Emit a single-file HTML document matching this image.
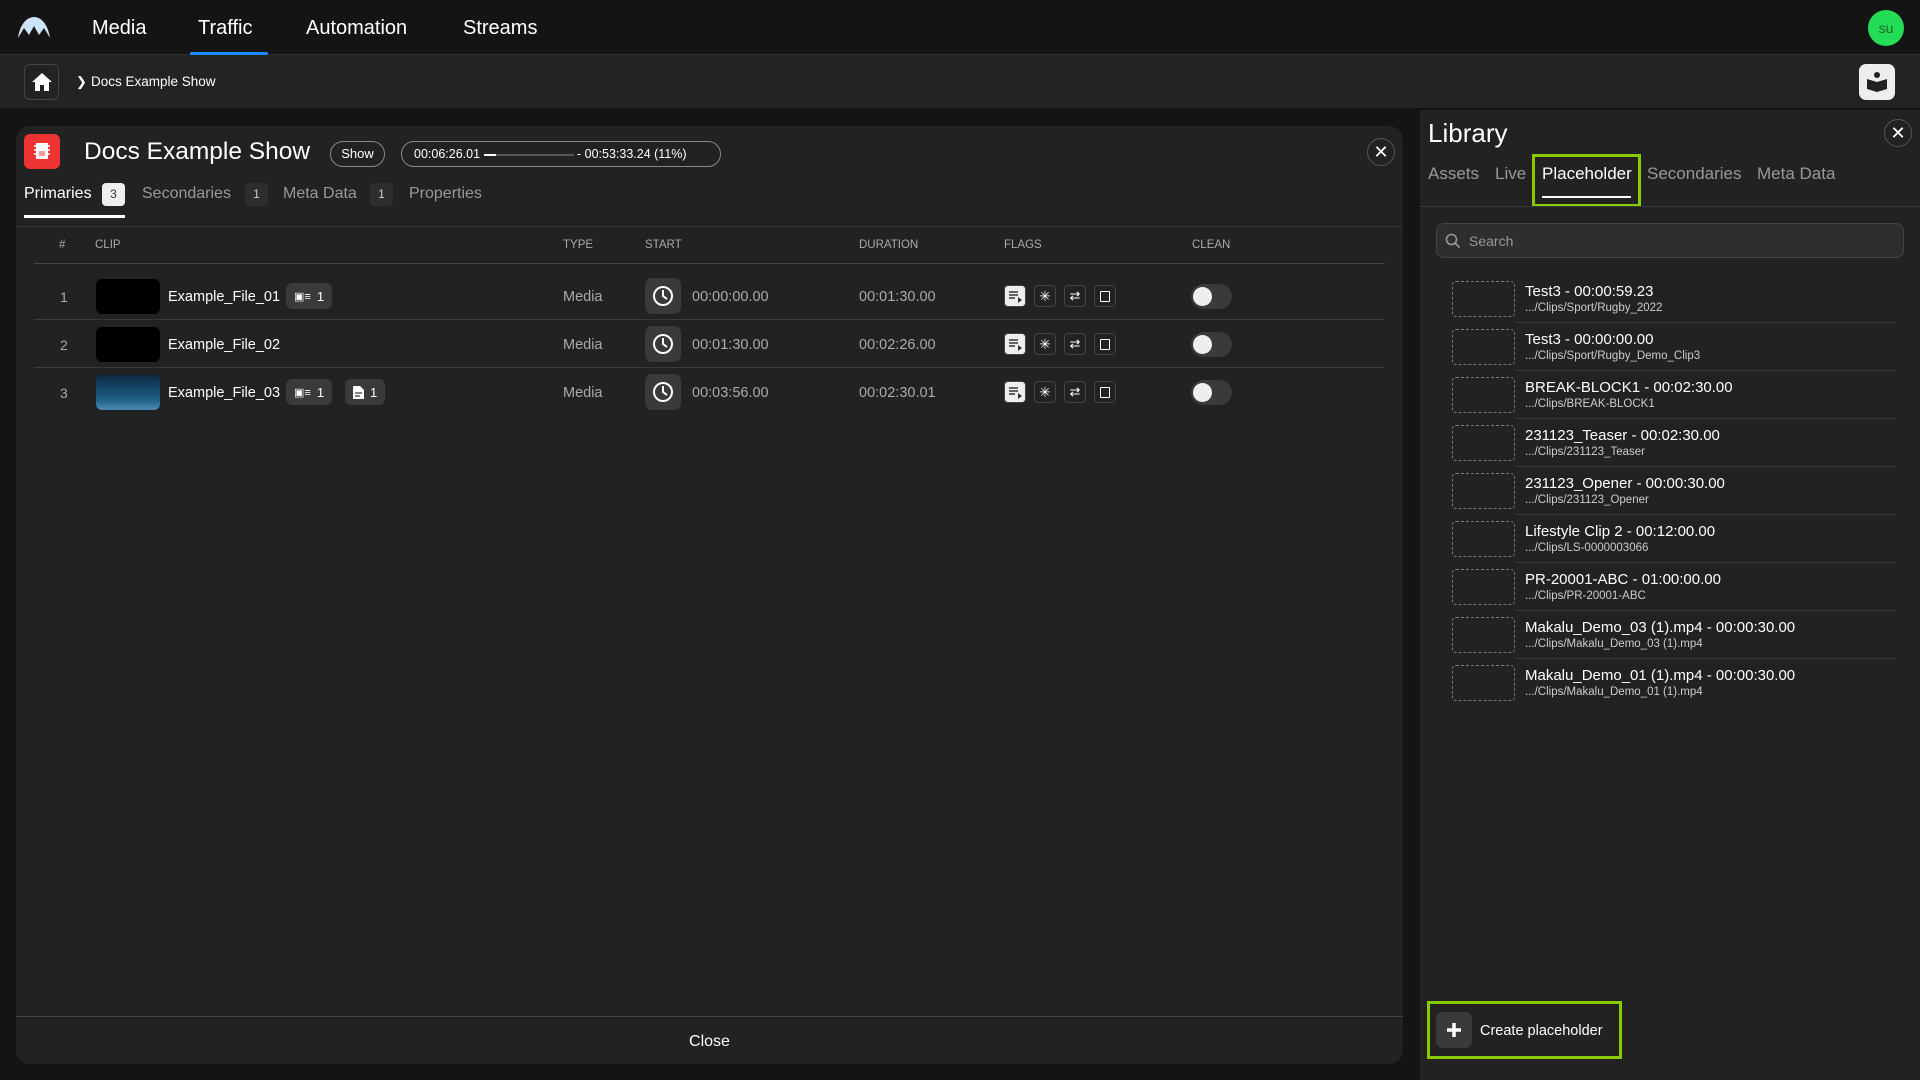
<!DOCTYPE html>
<html><head><meta charset="utf-8"><style>
*{box-sizing:border-box;margin:0;padding:0}
body{width:1920px;height:1080px;background:#141414;font-family:"Liberation Sans",sans-serif;color:#fff;position:relative;overflow:hidden}
.a{position:absolute}
.nav{font-size:20px;top:17px}
.th{font-size:11.5px;color:#aaa;top:239px}
.row{position:absolute;left:34px;width:1351px;height:48px;border-bottom:1px solid #3a3a3a}
.row>*{position:absolute}
.thumb{left:62px;top:7px;width:64px;height:35px;border-radius:6px;background:#000}
.nm{left:134px;top:17px;font-size:14.5px}
.bd{top:11px;height:26px;border-radius:6px;background:#3a3a3a;font-size:13px;padding:6px 8px;display:flex;gap:6px;align-items:center}
.ty{left:529px;top:17px;font-size:14.5px;color:#aaa}
.clk{left:611px;top:6px;width:36px;height:36px;border-radius:7px;background:#3a3a3a}
.st{left:658px;top:17px;font-size:14.5px;color:#aaa}
.du{left:825px;top:17px;font-size:14.5px;color:#aaa}
.fl{top:13px;width:22px;height:22px;border:1px solid #444;border-radius:4px}
.tg{left:1157px;top:12px;width:41px;height:25px;border-radius:13px;background:#3a3a3a}
.tg:after{content:"";position:absolute;left:2px;top:3px;width:19px;height:19px;border-radius:50%;background:#eee}
.it{position:absolute;left:1452px;width:444px;height:48px}
.it .bx{position:absolute;left:0;top:6px;width:63px;height:36px;border:1px dashed #777;border-radius:4px}
.it .t{position:absolute;left:73px;top:8px;font-size:15px}
.it .s{position:absolute;left:73px;top:27px;font-size:11.5px;color:#ccc}
.it .ln{position:absolute;left:64px;right:0;bottom:0;border-bottom:1px solid #3a3a3a}
</style></head><body>
<div class="a" style="left:0;top:0;width:1920px;height:55px;background:#141414;border-bottom:1px solid #333"></div>
<svg class="a" style="left:17px;top:16px" width="34" height="22" viewBox="0 0 34 22"><path d="M1 22C3 8 10 1 17 1S31 8 33 22L27 12 22 19 17 10 12 19 7 12Z" fill="#cfe3f7"/></svg>
<div class="a nav" style="left:92px">Media</div>
<div class="a nav" style="left:198px">Traffic</div>
<div class="a" style="left:190px;top:52px;width:78px;height:3px;background:#1a8cff;border-radius:2px"></div>
<div class="a nav" style="left:306px">Automation</div>
<div class="a nav" style="left:463px">Streams</div>
<div class="a" style="left:1868px;top:10px;width:36px;height:36px;border-radius:50%;background:#22dd55;color:#1a6a30;font-size:14px;text-align:center;line-height:36px">su</div>
<div class="a" style="left:0;top:55px;width:1920px;height:53px;background:#232323"></div>
<div class="a" style="left:24px;top:64px;width:35px;height:36px;border:1px solid #444;border-radius:6px"></div>
<svg class="a" style="left:31px;top:71px" width="22" height="22" viewBox="0 0 22 22"><path d="M11 2L1 11h3v9h5v-6h4v6h5v-9h3z" fill="#fff"/></svg>
<div class="a" style="left:76px;top:74px;font-size:13px">&#x276F;</div>
<div class="a" style="left:91px;top:74px;font-size:13.5px">Docs Example Show</div>
<div class="a" style="left:1859px;top:64px;width:36px;height:36px;border-radius:7px;background:#eee"></div>
<svg class="a" style="left:1866px;top:70px" width="22" height="24" viewBox="0 0 22 24"><circle cx="11" cy="5" r="3" fill="#222"/><path d="M1 9l10 3 10-3v10l-10 3-10-3z" fill="#222"/></svg>
<div class="a" style="left:16px;top:126px;width:1387px;height:938px;background:#222;border-radius:14px;overflow:hidden">
 <div class="a" style="left:8px;top:8px;width:36px;height:35px;border-radius:6px;background:#ee3333"></div>
 <svg class="a" style="left:16px;top:15px" width="20" height="20" viewBox="0 0 20 20"><rect x="4" y="2" width="12" height="16" rx="1" fill="#fff"/><path d="M2 5h2M2 9h2M2 13h2M16 5h2M16 9h2M16 13h2" stroke="#fff" stroke-width="1.5"/><path d="M8 10v5M10 10v5M12 10v5" stroke="#e33" stroke-width="1"/></svg>
 <div class="a" style="left:68px;top:12px;font-size:24.5px">Docs Example Show</div>
 <div class="a" style="left:314px;top:15px;width:55px;height:26px;border:1px solid #888;border-radius:13px;font-size:13px;text-align:center;line-height:24px">Show</div>
 <div class="a" style="left:385px;top:15px;width:320px;height:26px;border:1px solid #888;border-radius:13px;font-size:12.5px;line-height:24px;padding-left:12px">00:06:26.01 <span style="display:inline-block;width:90px;height:2px;background:#555;vertical-align:middle;position:relative"><span style="position:absolute;left:0;top:0;width:12px;height:2px;background:#fff"></span></span> - 00:53:33.24 (11%)</div>
 <div class="a" style="left:1351px;top:12px;width:28px;height:28px;border:1px solid #555;border-radius:50%;text-align:center;line-height:26px;font-size:18px">&#x2715;</div>
 <div class="a" style="left:8px;top:59px;font-size:16px">Primaries</div>
 <div class="a" style="left:86px;top:57px;width:23px;height:23px;background:#eee;color:#333;border-radius:4px;font-size:12px;text-align:center;line-height:23px">3</div>
 <div class="a" style="left:8px;top:89px;width:101px;height:3px;background:#fff"></div>
 <div class="a" style="left:126px;top:59px;font-size:16px;color:#999">Secondaries</div>
 <div class="a" style="left:229px;top:57px;width:23px;height:23px;background:#2d2d2d;color:#ccc;border-radius:4px;font-size:12px;text-align:center;line-height:23px">1</div>
 <div class="a" style="left:267px;top:59px;font-size:16px;color:#999">Meta Data</div>
 <div class="a" style="left:354px;top:57px;width:23px;height:23px;background:#2d2d2d;color:#ccc;border-radius:4px;font-size:12px;text-align:center;line-height:23px">1</div>
 <div class="a" style="left:393px;top:59px;font-size:16px;color:#999">Properties</div>
 <div class="a" style="left:0;top:100px;width:1387px;border-bottom:1px solid #333"></div>
 <div class="a" style="left:0;top:890px;width:1387px;border-bottom:1px solid #444"></div>
 <div class="a" style="left:0;top:907px;width:1387px;text-align:center;font-size:16px">Close</div>
</div>
<div class="a th" style="left:59px">#</div>
<div class="a th" style="left:95px">CLIP</div>
<div class="a th" style="left:563px">TYPE</div>
<div class="a th" style="left:645px">START</div>
<div class="a th" style="left:859px">DURATION</div>
<div class="a th" style="left:1004px">FLAGS</div>
<div class="a th" style="left:1192px">CLEAN</div>
<div class="a" style="left:34px;top:263px;width:1351px;border-bottom:1px solid #444"></div>

<div class="row" style="top:272px">
 <div style="left:26px;top:17px;font-size:14px;color:#aaa">1</div><div class="thumb"></div><div class="nm">Example_File_01</div>
 <div class="bd" style="left:252px"><span style="font-size:11px">&#x25A3;&#x2261;</span>1</div>
 <div class="ty">Media</div><div class="clk"><svg width="36" height="36"><circle cx="18" cy="18" r="9" fill="none" stroke="#fff" stroke-width="2"/><path d="M18 12v6l4 3" fill="none" stroke="#fff" stroke-width="2"/></svg></div>
 <div class="st">00:00:00.00</div><div class="du">00:01:30.00</div>
 <div class="fl" style="left:970px;background:#eee"><svg width="20" height="20"><path d="M4 6h9M4 9h9M4 12h6" stroke="#333" stroke-width="1.5"/><path d="M13 11l4 3-4 3z" fill="#333"/></svg></div><div class="fl" style="left:1000px;text-align:center;font-size:14px;line-height:20px">&#x2733;</div><div class="fl" style="left:1030px;text-align:center;font-size:13px;line-height:20px">&#x21C4;</div><div class="fl" style="left:1060px"><div style="position:absolute;left:5px;top:5px;width:10px;height:11px;border:1.5px solid #fff;border-radius:1px"></div></div>
 <div class="tg"></div>
</div>
<div class="row" style="top:320px">
 <div style="left:26px;top:17px;font-size:14px;color:#aaa">2</div><div class="thumb"></div><div class="nm">Example_File_02</div>
 <div class="ty">Media</div><div class="clk"><svg width="36" height="36"><circle cx="18" cy="18" r="9" fill="none" stroke="#fff" stroke-width="2"/><path d="M18 12v6l4 3" fill="none" stroke="#fff" stroke-width="2"/></svg></div>
 <div class="st">00:01:30.00</div><div class="du">00:02:26.00</div>
 <div class="fl" style="left:970px;background:#eee"><svg width="20" height="20"><path d="M4 6h9M4 9h9M4 12h6" stroke="#333" stroke-width="1.5"/><path d="M13 11l4 3-4 3z" fill="#333"/></svg></div><div class="fl" style="left:1000px;text-align:center;font-size:14px;line-height:20px">&#x2733;</div><div class="fl" style="left:1030px;text-align:center;font-size:13px;line-height:20px">&#x21C4;</div><div class="fl" style="left:1060px"><div style="position:absolute;left:5px;top:5px;width:10px;height:11px;border:1.5px solid #fff;border-radius:1px"></div></div>
 <div class="tg"></div>
</div>
<div class="row" style="top:368px;border-bottom:none">
 <div style="left:26px;top:17px;font-size:14px;color:#aaa">3</div><div class="thumb" style="background:linear-gradient(180deg,#0c2a45,#1d5f85 70%,#4a8ab0)"></div><div class="nm">Example_File_03</div>
 <div class="bd" style="left:252px"><span style="font-size:11px">&#x25A3;&#x2261;</span>1</div>
 <div class="bd" style="left:311px"><svg width="11" height="13"><path d="M0 0h7l4 4v9H0z" fill="#fff"/><path d="M2 7h7M2 10h5" stroke="#3a3a3a" stroke-width="1.2"/></svg>1</div>
 <div class="ty">Media</div><div class="clk"><svg width="36" height="36"><circle cx="18" cy="18" r="9" fill="none" stroke="#fff" stroke-width="2"/><path d="M18 12v6l4 3" fill="none" stroke="#fff" stroke-width="2"/></svg></div>
 <div class="st">00:03:56.00</div><div class="du">00:02:30.01</div>
 <div class="fl" style="left:970px;background:#eee"><svg width="20" height="20"><path d="M4 6h9M4 9h9M4 12h6" stroke="#333" stroke-width="1.5"/><path d="M13 11l4 3-4 3z" fill="#333"/></svg></div><div class="fl" style="left:1000px;text-align:center;font-size:14px;line-height:20px">&#x2733;</div><div class="fl" style="left:1030px;text-align:center;font-size:13px;line-height:20px">&#x21C4;</div><div class="fl" style="left:1060px"><div style="position:absolute;left:5px;top:5px;width:10px;height:11px;border:1.5px solid #fff;border-radius:1px"></div></div>
 <div class="tg"></div>
</div>

<div class="a" style="left:1420px;top:110px;width:500px;height:970px;background:#222"></div>
<div class="a" style="left:1428px;top:118px;font-size:26px">Library</div>
<div class="a" style="left:1884px;top:119px;width:28px;height:28px;border:1px solid #555;border-radius:50%;text-align:center;line-height:26px;font-size:18px">&#x2715;</div>
<div class="a" style="left:1428px;top:164px;font-size:17px;color:#999">Assets</div>
<div class="a" style="left:1495px;top:164px;font-size:17px;color:#999">Live</div>
<div class="a" style="left:1532px;top:154px;width:109px;height:53px;border:3px solid #88cc00"></div>
<div class="a" style="left:1542px;top:164px;font-size:17px">Placeholder</div>
<div class="a" style="left:1542px;top:196px;width:89px;height:2px;background:#fff"></div>
<div class="a" style="left:1647px;top:164px;font-size:17px;color:#999">Secondaries</div>
<div class="a" style="left:1757px;top:164px;font-size:17px;color:#999">Meta Data</div>
<div class="a" style="left:1420px;top:206px;width:500px;border-bottom:1px solid #3a3a3a"></div>
<div class="a" style="left:1436px;top:223px;width:468px;height:35px;background:#2e2e2e;border:1px solid #444;border-radius:8px"></div>
<svg class="a" style="left:1445px;top:233px" width="16" height="16"><circle cx="6.5" cy="6.5" r="5" fill="none" stroke="#999" stroke-width="1.6"/><path d="M10 10l4.5 4.5" stroke="#999" stroke-width="1.6"/></svg>
<div class="a" style="left:1469px;top:233px;font-size:14px;color:#999">Search</div>

<div class="it" style="top:275px"><div class="bx"></div><div class="t">Test3 - 00:00:59.23</div><div class="s">.../Clips/Sport/Rugby_2022</div><div class="ln"></div></div>
<div class="it" style="top:323px"><div class="bx"></div><div class="t">Test3 - 00:00:00.00</div><div class="s">.../Clips/Sport/Rugby_Demo_Clip3</div><div class="ln"></div></div>
<div class="it" style="top:371px"><div class="bx"></div><div class="t">BREAK-BLOCK1 - 00:02:30.00</div><div class="s">.../Clips/BREAK-BLOCK1</div><div class="ln"></div></div>
<div class="it" style="top:419px"><div class="bx"></div><div class="t">231123_Teaser - 00:02:30.00</div><div class="s">.../Clips/231123_Teaser</div><div class="ln"></div></div>
<div class="it" style="top:467px"><div class="bx"></div><div class="t">231123_Opener - 00:00:30.00</div><div class="s">.../Clips/231123_Opener</div><div class="ln"></div></div>
<div class="it" style="top:515px"><div class="bx"></div><div class="t">Lifestyle Clip 2 - 00:12:00.00</div><div class="s">.../Clips/LS-0000003066</div><div class="ln"></div></div>
<div class="it" style="top:563px"><div class="bx"></div><div class="t">PR-20001-ABC - 01:00:00.00</div><div class="s">.../Clips/PR-20001-ABC</div><div class="ln"></div></div>
<div class="it" style="top:611px"><div class="bx"></div><div class="t">Makalu_Demo_03 (1).mp4 - 00:00:30.00</div><div class="s">.../Clips/Makalu_Demo_03 (1).mp4</div><div class="ln"></div></div>
<div class="it" style="top:659px"><div class="bx"></div><div class="t">Makalu_Demo_01 (1).mp4 - 00:00:30.00</div><div class="s">.../Clips/Makalu_Demo_01 (1).mp4</div></div>

<div class="a" style="left:1427px;top:1001px;width:195px;height:58px;border:3px solid #88cc00"></div>
<div class="a" style="left:1436px;top:1012px;width:36px;height:36px;border-radius:7px;background:#3a3a3a"></div>
<svg class="a" style="left:1444px;top:1020px" width="20" height="20"><path d="M10 3v14M3 10h14" stroke="#fff" stroke-width="3.5"/></svg>
<div class="a" style="left:1480px;top:1023px;font-size:14.5px">Create placeholder</div>
</body></html>
